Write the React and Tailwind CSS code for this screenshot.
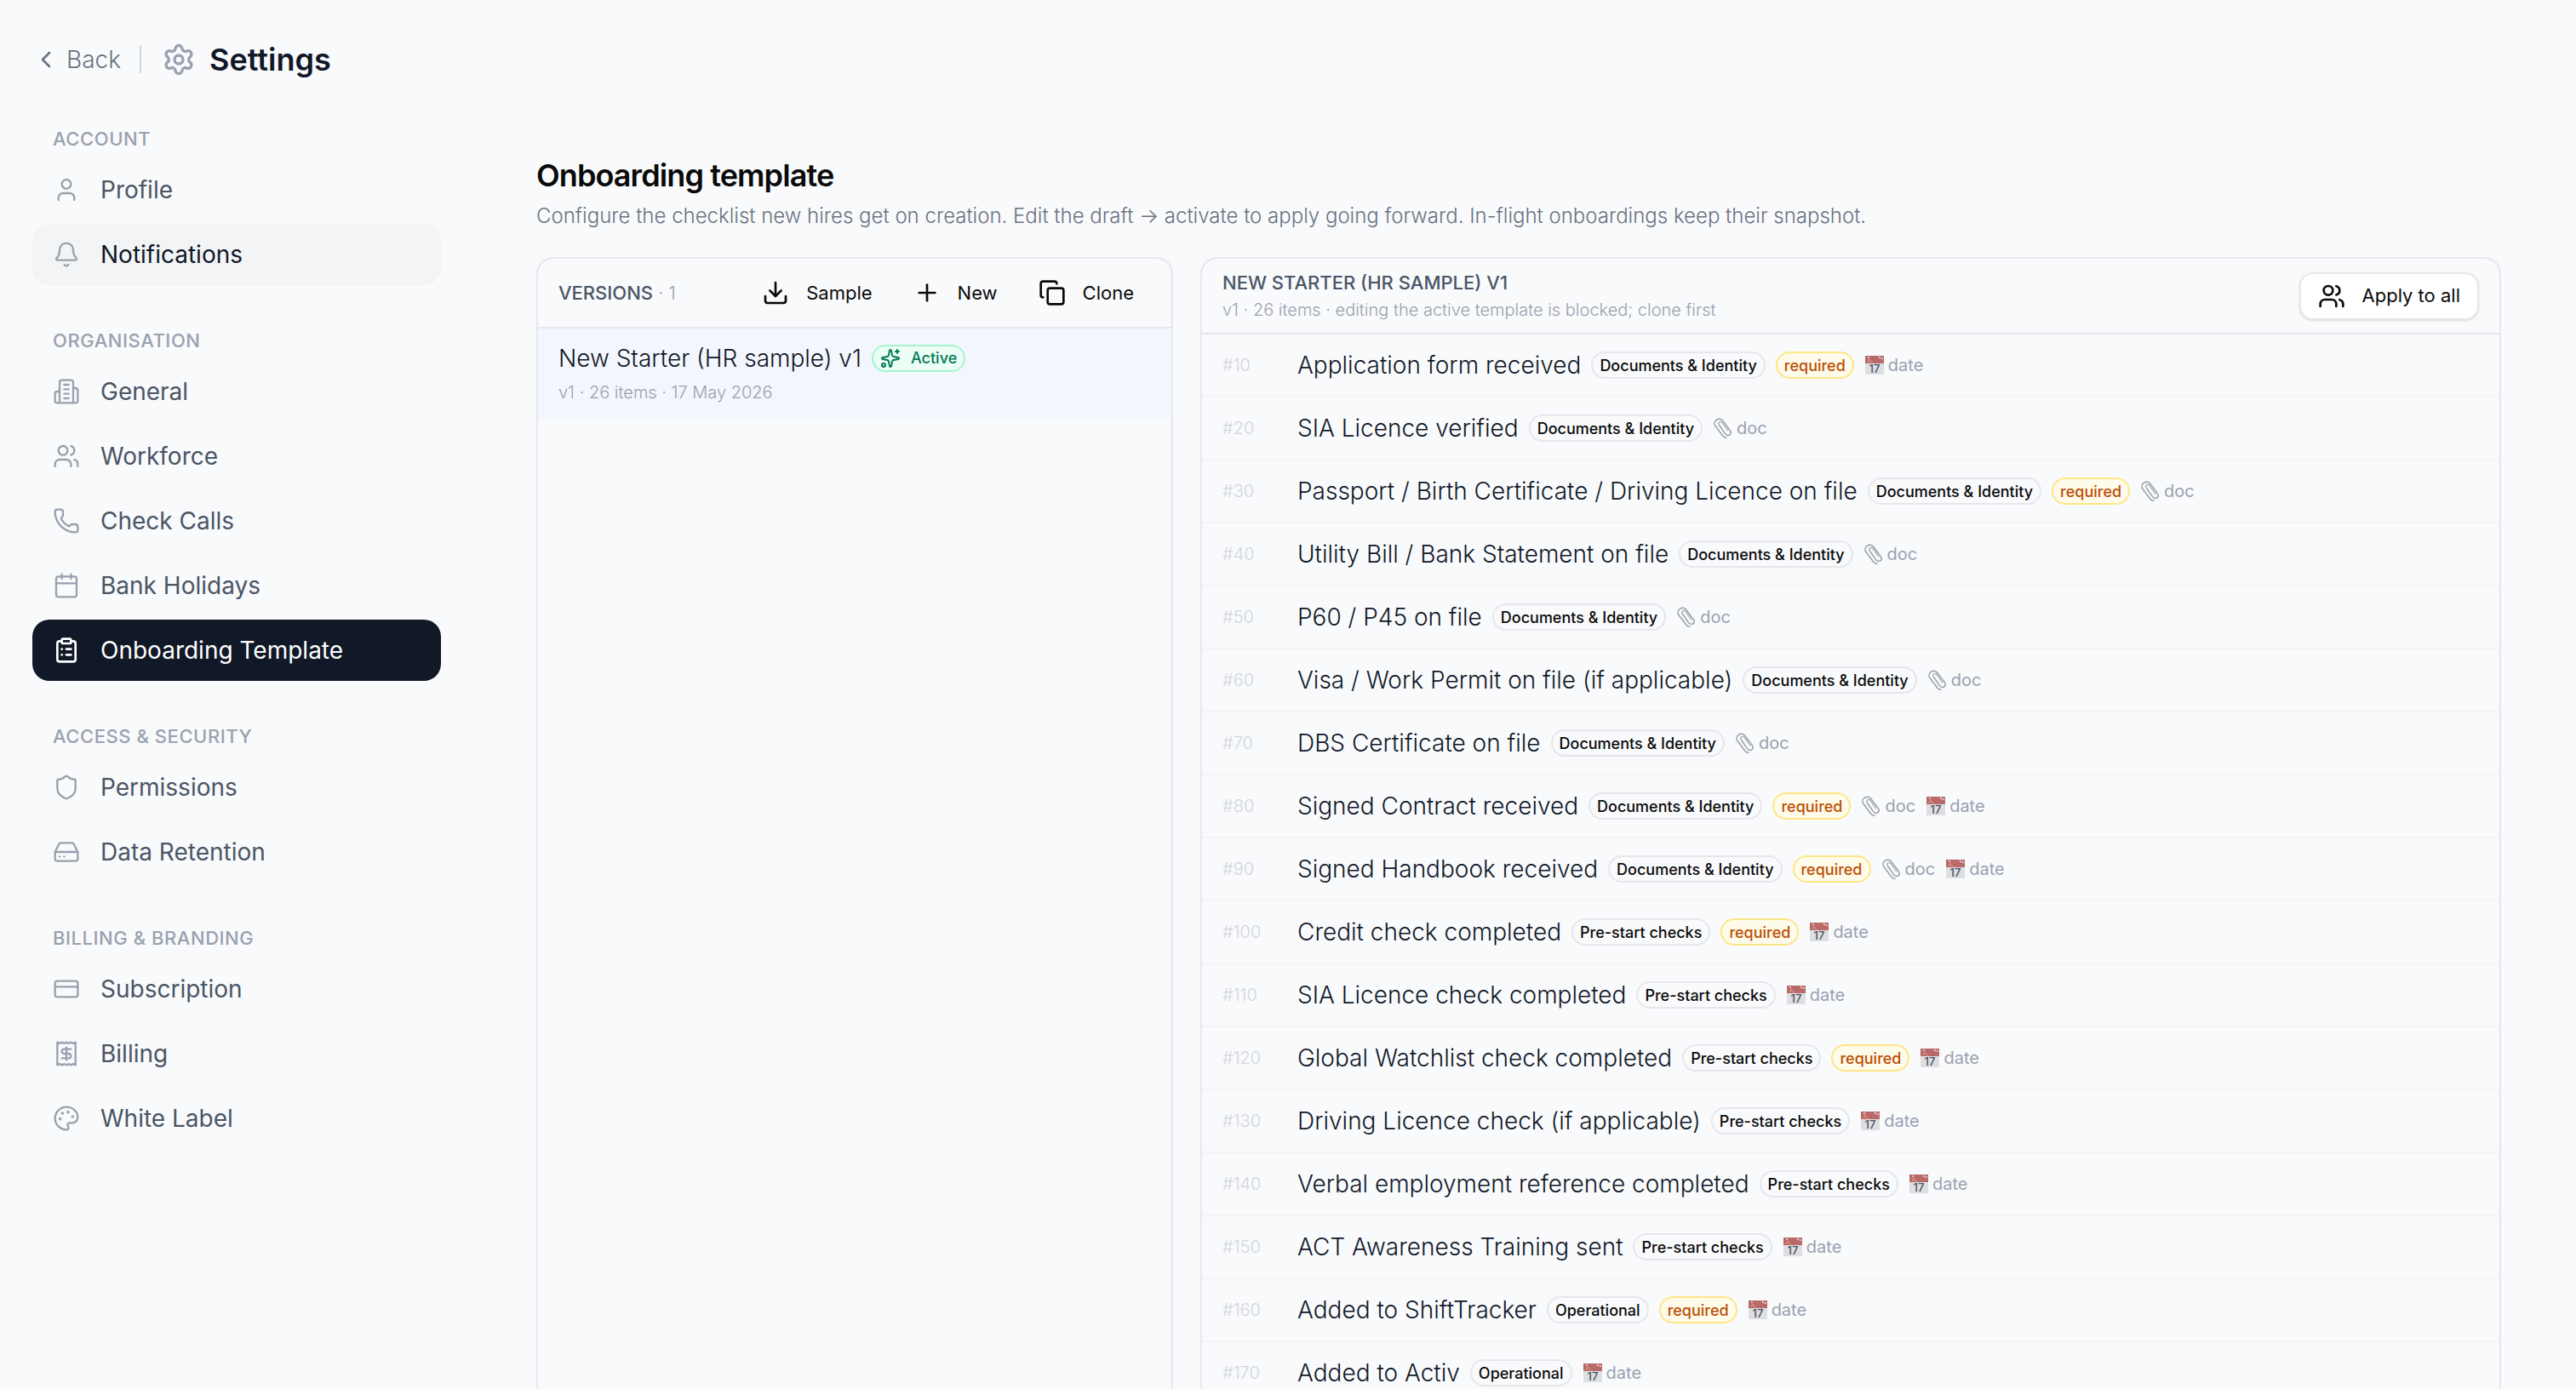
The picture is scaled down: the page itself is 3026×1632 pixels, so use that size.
import React, { useState } from 'react';
import {
    Bell, Calendar, ChevronLeft, ClipboardList, Copy, CreditCard, Download, HardDrive,
    Palette, Phone, Plus, Settings, Shield, Sparkles, User, Users
} from 'lucide-react';

// Office block with two wings
const OfficeIcon = ({ className, strokeWidth = 2 }) => (
    <svg viewBox="0 0 24 24" fill="none" stroke="currentColor" strokeWidth={strokeWidth} strokeLinecap="round" strokeLinejoin="round" className={className} aria-hidden="true">
        <path d="M6 22V4a2 2 0 0 1 2-2h8a2 2 0 0 1 2 2v18Z" />
        <path d="M6 12H4a2 2 0 0 0-2 2v6a2 2 0 0 0 2 2h2" />
        <path d="M18 9h2a2 2 0 0 1 2 2v9a2 2 0 0 1-2 2h-2" />
        <path d="M10 6h4M10 10h4M10 14h4M10 18h4" />
    </svg>
);

const ReceiptIcon = ({ className, strokeWidth = 2 }) => (
    <svg viewBox="0 0 24 24" fill="none" stroke="currentColor" strokeWidth={strokeWidth} strokeLinecap="round" strokeLinejoin="round" className={className} aria-hidden="true">
        <path d="M4 2v20l2-1 2 1 2-1 2 1 2-1 2 1 2-1 2 1V2l-2 1-2-1-2 1-2-1-2 1-2-1-2 1Z" />
        <path d="M16 8h-6a2 2 0 1 0 0 4h4a2 2 0 1 1 0 4H8" />
        <path d="M12 17.5v-11" />
    </svg>
);

const PaperclipIcon = () => (
    <svg viewBox="0 0 24 24" fill="none" strokeLinecap="round" className="h-6 w-6" aria-hidden="true">
        <path d="M7.5 8.5 14.6 18.6c1.3 1.8 3.6 2.4 5.2 1.2s1.7-3.4.4-5.2L11.6 3.2C10 1 6.6.6 4.3 2.3S1.2 7 2.8 9.2l9 12c.9 1.1 2.7 2 4.2 2" stroke="#9a9fa8" strokeWidth="1.5" />
        <path d="M7.5 8.5c-1-1.5-.8-2.9.3-3.7s2.5-.5 3.5.9l6.5 9.2" stroke="#aeb3bb" strokeWidth="1.5" />
    </svg>
);

const DateIcon = () => (
    <svg viewBox="0 0 24 24" className="h-6 w-6" aria-hidden="true">
        <rect x="1" y="1" width="22" height="22" fill="#dddfe2" />
        <rect x="1" y="1" width="22" height="9" fill="#b96a68" />
        <path d="M5 2v2M17 2l2 2M21 3v2" stroke="#ecd9d9" strokeWidth="1.5" />
        <path d="m4 9 2-4 2 4h2" stroke="#d9a08c" strokeWidth="1" fill="none" />
        <text x="12" y="21" textAnchor="middle" fontSize="13" fontWeight="500" fill="#4a4f5c">17</text>
    </svg>
);

const SECTIONS = [
    {
        title: 'Account',
        items: [
            { label: 'Profile', icon: User },
            { label: 'Notifications', icon: Bell, hovered: true }
        ]
    },
    {
        title: 'Organisation',
        items: [
            { label: 'General', icon: OfficeIcon },
            { label: 'Workforce', icon: Users },
            { label: 'Check Calls', icon: Phone },
            { label: 'Bank Holidays', icon: Calendar },
            { label: 'Onboarding Template', icon: ClipboardList }
        ]
    },
    {
        title: 'Access & Security',
        items: [
            { label: 'Permissions', icon: Shield },
            { label: 'Data Retention', icon: HardDrive }
        ]
    },
    {
        title: 'Billing & Branding',
        items: [
            { label: 'Subscription', icon: CreditCard },
            { label: 'Billing', icon: ReceiptIcon },
            { label: 'White Label', icon: Palette }
        ]
    }
];

const DOCS = 'Documents & Identity';
const PRE = 'Pre-start checks';
const OPS = 'Operational';

const ITEMS = [
    { order: 10, title: 'Application form received', category: DOCS, required: true, date: true },
    { order: 20, title: 'SIA Licence verified', category: DOCS, doc: true },
    { order: 30, title: 'Passport / Birth Certificate / Driving Licence on file', category: DOCS, required: true, doc: true },
    { order: 40, title: 'Utility Bill / Bank Statement on file', category: DOCS, doc: true },
    { order: 50, title: 'P60 / P45 on file', category: DOCS, doc: true },
    { order: 60, title: 'Visa / Work Permit on file (if applicable)', category: DOCS, doc: true },
    { order: 70, title: 'DBS Certificate on file', category: DOCS, doc: true },
    { order: 80, title: 'Signed Contract received', category: DOCS, required: true, doc: true, date: true },
    { order: 90, title: 'Signed Handbook received', category: DOCS, required: true, doc: true, date: true },
    { order: 100, title: 'Credit check completed', category: PRE, required: true, date: true },
    { order: 110, title: 'SIA Licence check completed', category: PRE, date: true },
    { order: 120, title: 'Global Watchlist check completed', category: PRE, required: true, date: true },
    { order: 130, title: 'Driving Licence check (if applicable)', category: PRE, date: true },
    { order: 140, title: 'Verbal employment reference completed', category: PRE, date: true },
    { order: 150, title: 'ACT Awareness Training sent', category: PRE, date: true },
    { order: 160, title: 'Added to ShiftTracker', category: OPS, required: true, date: true },
    { order: 170, title: 'Added to Activ', category: OPS, date: true }
];

const NavItem = ({ item, active, onSelect }) => {
    const Icon = item.icon;
    let tone = 'text-gray-600 hover:bg-gray-100';
    if (item.hovered) tone = 'bg-gray-100 text-gray-900';
    if (active) tone = 'bg-[#111827] text-white';

    return (
        <button type="button" onClick={onSelect} className={`flex h-[72px] w-full items-center gap-6 rounded-[20px] px-6 text-left text-[28px] ${tone}`}>
            <Icon className={`h-8 w-8 shrink-0 ${active ? 'text-white' : 'text-gray-400'}`} strokeWidth={active ? 2 : 1.75} />
            {item.label}
        </button>
    );
};

const GhostButton = ({ icon: Icon, children }) => (
    <button type="button" className="flex h-14 items-center gap-5 rounded-2xl px-5 text-[22px] text-neutral-950 hover:bg-gray-100">
        <Icon className="h-8 w-8" strokeWidth={2} />
        {children}
    </button>
);

const Badge = ({ children, className }) => (
    <span className={`flex h-8 items-center rounded-full border-2 px-2 text-[18px] font-medium ${className}`}>{children}</span>
);

const ChecklistRow = ({ item }) => (
    <li className="flex h-[74px] items-center gap-6 border-b-2 border-gray-100 px-6">
        <span className="w-16 text-[20px] font-light text-gray-300">#{item.order}</span>
        <div className="flex items-center gap-3">
            <span className="text-[28px] font-light text-gray-900">{item.title}</span>
            <Badge className="border-gray-200 text-neutral-950">{item.category}</Badge>
            {item.required && <Badge className="border-amber-200 bg-amber-50 text-amber-700">required</Badge>}
            {item.doc && (
                <span className="flex items-center gap-1 text-[20px] text-gray-400"><PaperclipIcon />doc</span>
            )}
            {item.date && (
                <span className="flex items-center gap-1 text-[20px] text-gray-400"><DateIcon />date</span>
            )}
        </div>
    </li>
);

export default function App() {
    const [active, setActive] = useState('Onboarding Template');

    return (
        <div className="flex h-screen flex-col overflow-hidden bg-[#f9fafc] font-['Inter',sans-serif] text-neutral-950">
            <header className="flex h-[140px] shrink-0 items-center px-[38px]">
                <button type="button" className="flex items-center gap-2 text-[28px] font-light text-gray-500">
                    <ChevronLeft className="h-8 w-8" />
                    Back
                </button>
                <div className="mr-6 ml-[22px] h-8 w-0.5 bg-gray-300" />
                <Settings className="h-10 w-10 text-gray-400" />
                <h1 className="ml-4 text-[36px] font-semibold text-gray-900">Settings</h1>
            </header>

            <div className="flex min-h-0 flex-1">
                <nav className="ml-[38px] flex w-[480px] shrink-0 flex-col gap-[49px] pt-[7px]">
                    {SECTIONS.map(section => (
                        <div key={section.title}>
                            <h2 className="mb-2 px-6 text-[22px] leading-8 font-medium tracking-wide text-gray-400 uppercase">{section.title}</h2>
                            <div className="flex flex-col gap-1">
                                {section.items.map(item => (
                                    <NavItem key={item.label} item={item} active={active === item.label} onSelect={() => setActive(item.label)} />
                                ))}
                            </div>
                        </div>
                    ))}
                </nav>

                <main className="flex min-w-0 flex-1 flex-col pt-10 pr-[88px] pl-28">
                    <h2 className="text-[36px] leading-[52px] font-semibold tracking-tight">Onboarding template</h2>
                    <p className="mt-1 text-[24px] leading-9 font-light text-gray-500">
                        Configure the checklist new hires get on creation. Edit the draft → activate to apply going forward. In-flight onboardings keep their snapshot.
                    </p>

                    <div className="mt-[30px] grid flex-1 grid-cols-12 gap-8">
                        {/* Versions */}
                        <section className="col-span-4 overflow-hidden rounded-[20px] border-2 border-gray-200">
                            <div className="flex h-[82px] items-center justify-between border-b-2 border-gray-200 px-6">
                                <h3 className="text-[22px] font-medium text-gray-600 uppercase">
                                    Versions <span className="font-light text-gray-400">· 1</span>
                                </h3>
                                <div className="flex gap-2">
                                    <GhostButton icon={Download}>Sample</GhostButton>
                                    <GhostButton icon={Plus}>New</GhostButton>
                                    <GhostButton icon={Copy}>Clone</GhostButton>
                                </div>
                            </div>
                            <button type="button" className="flex h-[106px] w-full flex-col justify-center gap-1 bg-[#f3f6fc] px-6 text-left">
                                <span className="flex items-center gap-3 text-[28px] leading-10 font-light text-gray-900">
                                    New Starter (HR sample) v1
                                    <span className="flex h-8 items-center gap-3 rounded-full border-2 border-emerald-200 bg-emerald-50 px-2 text-[18px] font-medium text-emerald-700">
                                        <Sparkles className="h-6 w-6" />
                                        Active
                                    </span>
                                </span>
                                <span className="text-[20px] leading-8 font-light text-gray-400">v1 · 26 items · 17 May 2026</span>
                            </button>
                        </section>

                        {/* Checklist of the selected version */}
                        <section className="col-span-8 overflow-hidden rounded-[20px] border-2 border-gray-200">
                            <div className="flex h-[89px] items-center justify-between border-b-2 border-gray-200 px-6">
                                <div>
                                    <h3 className="text-[22px] leading-8 font-medium text-gray-600 uppercase">New Starter (HR sample) v1</h3>
                                    <p className="text-[20px] leading-8 font-light text-gray-400">v1 · 26 items · editing the active template is blocked; clone first</p>
                                </div>
                                <button type="button" className="flex h-14 items-center gap-5 rounded-2xl border-2 border-gray-200 bg-white px-5 text-[22px] shadow-sm">
                                    <Users className="h-8 w-8" />
                                    Apply to all
                                </button>
                            </div>
                            <ul>
                                {ITEMS.map(item => <ChecklistRow key={item.order} item={item} />)}
                            </ul>
                        </section>
                    </div>
                </main>
            </div>
        </div>
    );
}
